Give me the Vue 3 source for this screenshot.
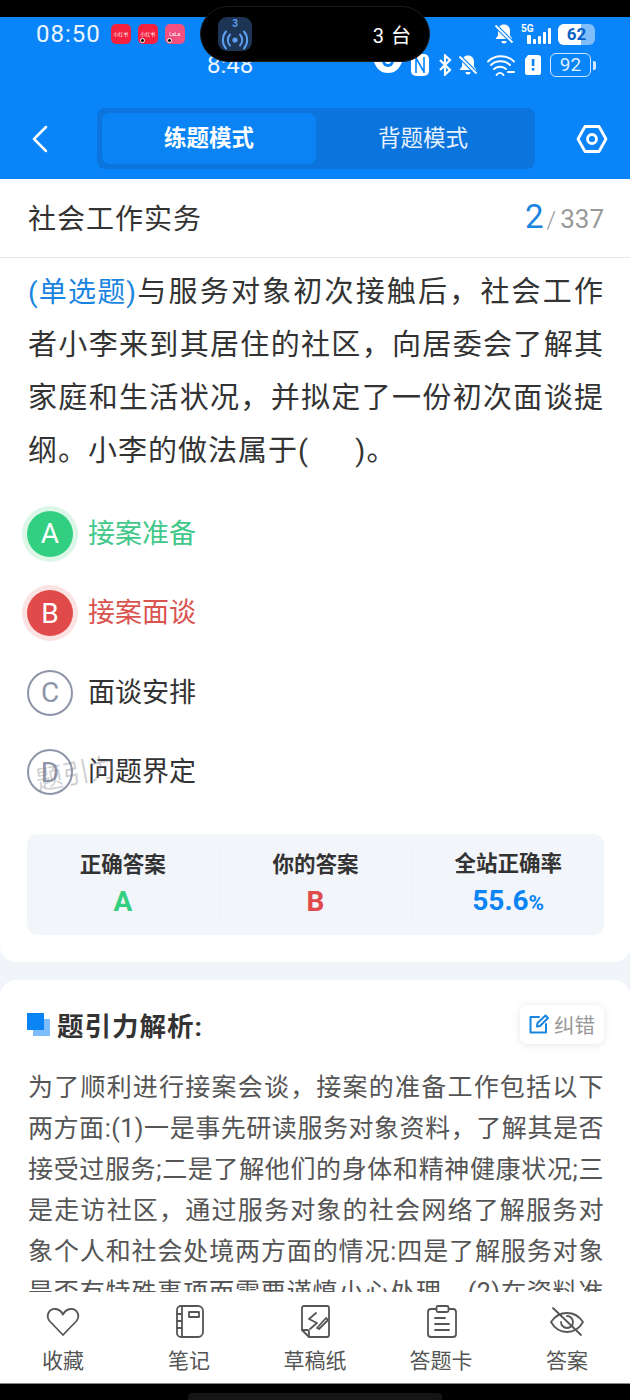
<template>
  <div class="page">
    <div class="camera-bar"></div>

    <!-- 灵动岛 -->
    <div class="island">
      <div class="island-app">
        <span class="island-num">3</span>
        <svg width="32" height="20" viewBox="0 0 32 20" fill="none" stroke="#5b9ef0" stroke-width="2" stroke-linecap="round">
          <circle cx="16" cy="10" r="2.6" fill="#5b9ef0" stroke="none" />
          <path d="M11 4.5a8 8 0 0 0 0 11M21 4.5a8 8 0 0 1 0 11M7 1.5a13 13 0 0 0 0 17M25 1.5a13 13 0 0 1 0 17" />
        </svg>
      </div>
      <span class="island-text">3 台</span>
    </div>

    <header class="header">
      <div class="status-row">
        <span class="status-time">08:50</span>
        <span class="app-badge red">小红书</span>
        <span class="app-badge red dot">小红书</span>
        <span class="app-badge pink dot">LaLa</span>
        <div class="status-right">
          <svg width="20" height="22" viewBox="0 0 20 22" fill="#fff">
            <path d="M10 1.5c-3.6 0-6 2.700-6 6.200v4.800L1.500 16h17L16 12.500V7.700c0-3.500-2.400-6.200-6-6.200zM7.500 18h5a2.500 2.500 0 0 1-5 0z" />
            <path d="M1.500 2.500l17 17" stroke="#0a85f9" stroke-width="4" />
            <path d="M1.500 2.500l17 17" stroke="#fff" stroke-width="1.800" />
          </svg>
          <div class="signal">
            <span class="signal-5g">5G</span>
            <div class="signal-bars">
              <i class="bar-arrow"></i><i style="height: 5px"></i><i style="height: 8px"></i><i style="height: 12px"></i><i style="height: 16px"></i>
            </div>
          </div>
          <div class="battery-top">
            <span class="battery-fill"></span>
            <span class="battery-num">62</span>
          </div>
        </div>
      </div>

      <div class="status-row second">
        <span class="status-time small">8:48</span>
        <div class="status-right second-right">
          <svg width="28" height="24" viewBox="0 0 28 24">
            <path d="M0 9c3-7 8-9 14-9s11 2 14 9c-3 8-8 11-14 11S3 17 0 9z" fill="#fff" />
            <circle cx="14" cy="8" r="6" fill="#0a85f9" />
            <circle cx="14" cy="8" r="3" fill="#fff" />
          </svg>
          <svg width="20" height="22" viewBox="0 0 20 22" fill="none" stroke="#fff" stroke-width="2">
            <rect x="1" y="0" width="18" height="22" rx="5" fill="#fff" stroke="none" />
            <path d="M6 3v16M14 3v16M6 4l8 14" stroke="#0a85f9" stroke-width="1.600" />
          </svg>
          <svg class="bluetooth" width="14" height="22" viewBox="0 0 14 22" fill="none" stroke="#fff" stroke-width="2.200">
            <path d="M2 6l10 10-5 4.500V1.500L12 6 2 16" />
          </svg>
          <svg width="20" height="22" viewBox="0 0 20 22" fill="#fff">
            <path d="M10 1.500c-3.600 0-6 2.700-6 6.200v4.800L1.500 16h17L16 12.500V7.700c0-3.500-2.400-6.200-6-6.200zM7.500 18h5a2.500 2.500 0 0 1-5 0z" />
            <path d="M1.500 2.500l17 17" stroke="#0a85f9" stroke-width="4" />
            <path d="M1.500 2.500l17 17" stroke="#fff" stroke-width="1.800" />
          </svg>
          <svg width="30" height="24" viewBox="0 0 30 24" fill="none" stroke="#fff" stroke-width="1.800" stroke-linecap="round">
            <path d="M2 8.500c7-7 19-7 26 0M5 12c5-5 14-5 19 0M8 16c3-3 9-3 12 0M10.500 22a4 4 0 0 1 7 0" />
            <path d="M22 19h6" stroke-width="2" />
          </svg>
          <svg width="18" height="22" viewBox="0 0 18 22">
            <path d="M4 1h10a3 3 0 0 1 3 3v15a2 2 0 0 1-2 2H3a2 2 0 0 1-2-2V5z" fill="#fff" />
            <rect x="7.800" y="5" width="2.600" height="7" fill="#0a85f9" />
            <rect x="7.800" y="14" width="2.600" height="2.600" fill="#0a85f9" />
          </svg>
          <div class="battery-line">
            <span class="battery-box">92</span>
            <i class="battery-cap"></i>
          </div>
        </div>
      </div>

      <nav class="nav">
        <svg class="back" width="16" height="28" viewBox="0 0 16 28" fill="none" stroke="#fff" stroke-width="2.500" stroke-linecap="round" stroke-linejoin="round">
          <path d="M14 2L2 14l12 12" />
        </svg>
        <div class="mode-switch">
          <div class="mode active">练题模式</div>
          <div class="mode">背题模式</div>
        </div>
        <svg class="setting" width="32" height="32" viewBox="0 0 32 32" fill="none" stroke="#fff" stroke-width="2.800" stroke-linejoin="round">
          <path d="M9 3.500h14L30 16l-7 12.500H9L2 16z" />
          <circle cx="16" cy="16" r="4.500" />
        </svg>
      </nav>
    </header>

    <main class="content">
      <section class="card question-card">
        <div class="title-row">
          <span class="subject">社会工作实务</span>
          <span class="progress"><b>2</b><em>/</em>337</span>
        </div>

        <p class="question">
          <span class="q-type">(单选题)</span>与服务对象初次接触后，社会工作者小李来到其居住的社区，向居委会了解其家庭和生活状况，并拟定了一份初次面谈提纲。小李的做法属于(&emsp;&ensp;)。
        </p>

        <div class="options">
          <div v-for="opt in options" :key="opt.key" class="option" :class="opt.state">
            <span class="circle">{{ opt.key }}</span>
            <span class="opt-text">{{ opt.text }}</span>
          </div>
          <span class="watermark">题引力</span>
        </div>

        <div class="stats">
          <div class="stat">
            <div class="stat-label">正确答案</div>
            <div class="stat-value green">A</div>
          </div>
          <div class="stat">
            <div class="stat-label">你的答案</div>
            <div class="stat-value red-text">B</div>
          </div>
          <div class="stat">
            <div class="stat-label">全站正确率</div>
            <div class="stat-value blue">55.6<small>%</small></div>
          </div>
        </div>
      </section>

      <section class="card analysis-card">
        <div class="analysis-head">
          <span class="squares"><i></i><i></i></span>
          <h2>题引力解析:</h2>
          <button class="fix-btn">
            <svg width="20" height="20" viewBox="0 0 20 20" fill="none" stroke="#1a85e0" stroke-width="2" stroke-linecap="round" stroke-linejoin="round">
              <path d="M10 3H1.500v15.500H17V10" />
              <path d="M8 12.500l.5-3.500 8-7.500 2.500 2.500-8 8z" />
            </svg>
            纠错
          </button>
        </div>
        <p class="analysis-text">
          为了顺利进行接案会谈，接案的准备工作包括以下两方面:(1)一是事先研读服务对象资料，了解其是否接受过服务;二是了解他们的身体和精神健康状况;三是走访社区，通过服务对象的社会网络了解服务对象个人和社会处境两方面的情况:四是了解服务对象是否有特殊事项而需要谨慎小心处理。(2)在资料准备的基础上，拟定初次面谈提纲。
        </p>
      </section>
    </main>

    <footer class="tabbar">
      <div v-for="tab in tabs" :key="tab.label" class="tab">
        <svg width="40" height="36" viewBox="0 0 40 36" fill="none" stroke="#555" stroke-width="1.800" stroke-linecap="round" stroke-linejoin="round">
          <path v-for="d in tab.paths" :key="d" :d="d" />
        </svg>
        <span>{{ tab.label }}</span>
      </div>
    </footer>

    <div class="home-area"><i class="home-bar"></i></div>
  </div>
</template>

<script setup>
const options = [
  { key: 'A', text: '接案准备', state: 'right' },
  { key: 'B', text: '接案面谈', state: 'wrong' },
  { key: 'C', text: '面谈安排', state: '' },
  { key: 'D', text: '问题界定', state: '' },
]

const tabs = [
  {
    label: '收藏',
    paths: ['M20 31L7 17.500C2 12 6 4.500 12.500 5c3.500.3 6 2.500 7.500 5.500 1.500-3 4-5.200 7.500-5.500C34 4.500 38 12 33 17.500z'],
  },
  {
    label: '笔记',
    paths: [
      'M12 2h17a5 5 0 0 1 5 5v21a5 5 0 0 1-5 5H12a4 4 0 0 1-4-4V6a4 4 0 0 1 4-4z',
      'M13 2v31M8 10h5M8 17h5M8 24h5',
      'M20 8h10v5H20z',
    ],
  },
  {
    label: '草稿纸',
    paths: [
      'M9 2h23a2 2 0 0 1 2 2v27a2 2 0 0 1-2 2H14l-7-7V4a2 2 0 0 1 2-2z',
      'M7 26h5a2 2 0 0 1 2 2v5',
      'M21 9l-7 6 8 4-7 6',
      'M22 24l9-10 2 2-9 9z',
    ],
  },
  {
    label: '答题卡',
    paths: [
      'M15 5h-5a3 3 0 0 0-3 3v22a3 3 0 0 0 3 3h22a3 3 0 0 0 3-3V8a3 3 0 0 0-3-3h-4',
      'M17 2h9a1.500 1.500 0 0 1 1.500 1.500v3A1.500 1.500 0 0 1 26 8h-9a1.500 1.500 0 0 1-1.500-1.500v-3A1.500 1.500 0 0 1 17 2z',
      'M14 14h10M14 20h14M14 26h14',
    ],
  },
  {
    label: '答案',
    paths: [
      'M4 18c4-6 9-9 16-9s12 3 16 9c-4 7-9 10-16 10S8 25 4 18z',
      'M20 12a6 6 0 1 1-6 6',
      'M6 4l28 27',
    ],
  },
]
</script>

<style scoped>
.page {
  position: relative;
  width: 630px;
  height: 1400px;
  display: flex;
  flex-direction: column;
  overflow: hidden;
  background: #f1f5f9;
  font-family: Roboto, "Noto Sans CJK SC", sans-serif;
}

.camera-bar {
  height: 17px;
  background: #000;
  flex: none;
}

.island {
  position: absolute;
  left: 200px;
  top: 6px;
  width: 230px;
  height: 56px;
  box-sizing: border-box;
  padding: 0 17px 0 17px;
  display: flex;
  align-items: center;
  justify-content: space-between;
  background: #000;
  border: 1px solid #1c1c1c;
  border-radius: 28px;
  z-index: 5;
}

.island-app {
  width: 34px;
  height: 34px;
  border-radius: 9px;
  background: #1d3554;
  display: flex;
  flex-direction: column;
  align-items: center;
  justify-content: center;
  line-height: 1;
}

.island-num {
  font-size: 10px;
  font-weight: 700;
  color: #5b9ef0;
  margin-bottom: 1px;
}

.island-text {
  color: #fff;
  font-size: 20px;
  letter-spacing: 1px;
}

.header {
  flex: none;
  height: 162px;
  background: #0a85f9;
  color: #fff;
  overflow: hidden;
}

.status-row {
  height: 34px;
  display: flex;
  align-items: center;
  padding-left: 36px;
  gap: 7px;
}

.status-time {
  font-size: 24px;
  letter-spacing: 1px;
  margin-right: 3px;
  color: #eaf5ff;
}

.app-badge {
  position: relative;
  width: 20px;
  height: 20px;
  border-radius: 5px;
  font-size: 5px;
  line-height: 20px;
  text-align: center;
  white-space: nowrap;
  overflow: hidden;
  color: #fff;
}

.app-badge.dot::after {
  content: "";
  position: absolute;
  left: 2px;
  bottom: 1px;
  width: 3px;
  height: 3px;
  border: 1px solid #fff;
  border-radius: 50%;
  background: #000;
}

.app-badge.red {
  background: #f5213f;
}

.app-badge.pink {
  background: #f4507f;
}

.status-right {
  margin-left: auto;
  padding-right: 35px;
  display: flex;
  align-items: center;
  gap: 7px;
}

.signal {
  width: 30px;
  line-height: 1;
}

.signal-5g {
  display: block;
  font-size: 10px;
  font-weight: 700;
  margin-bottom: -6px;
}

.signal-bars {
  height: 16px;
  display: flex;
  align-items: flex-end;
  justify-content: flex-end;
  gap: 2px;
}

.signal-bars i {
  width: 3px;
  background: #fff;
  border-radius: 1px;
}

.signal-bars .bar-arrow {
  height: 9px;
  width: 4px;
}

.battery-top {
  position: relative;
  width: 37px;
  height: 21px;
  border-radius: 6px;
  background: #7fbdfb;
  overflow: hidden;
  text-align: center;
}

.battery-fill {
  position: absolute;
  left: 0;
  top: 0;
  bottom: 0;
  width: 62%;
  background: #fff;
}

.battery-num {
  position: relative;
  font-size: 17px;
  font-weight: 700;
  line-height: 21px;
  color: #0a5fc4;
}

.status-row.second {
  height: 28px;
  margin-top: 0;
}

.status-time.small {
  margin-left: 171px;
  font-size: 24px;
  letter-spacing: 0;
}

.second-right {
  gap: 8px;
  padding-right: 34px;
}

.bluetooth {
  margin-right: -2px;
}

.battery-line {
  display: flex;
  align-items: center;
  gap: 2px;
}

.battery-box {
  width: 41px;
  height: 24px;
  box-sizing: border-box;
  border: 1.5px solid #cfe7ff;
  border-radius: 6px;
  text-align: center;
  font-size: 19px;
  line-height: 21px;
  color: #dff0ff;
}

.battery-cap {
  width: 3px;
  height: 9px;
  border-radius: 0 2px 2px 0;
  background: #cfe7ff;
}

.nav {
  height: 61px;
  margin-top: 29px;
  display: flex;
  align-items: center;
  padding: 0 22px 0 32px;
}

.back {
  flex: none;
}

.mode-switch {
  width: 438px;
  height: 61px;
  box-sizing: border-box;
  margin-left: 49px;
  padding: 5px;
  display: flex;
  background: #0b74dd;
  border-radius: 8px;
}

.mode {
  flex: 1;
  display: flex;
  align-items: center;
  justify-content: center;
  padding-bottom: 6px;
  font-size: 22.5px;
  border-radius: 8px;
  color: #e6f2ff;
}

.mode.active {
  flex: none;
  width: 214px;
  background: #0a84f5;
  color: #fff;
  font-weight: 700;
}

.setting {
  flex: none;
  margin-left: 41px;
}

.content {
  flex: 1;
  min-height: 0;
  overflow: hidden;
  display: flex;
  flex-direction: column;
  gap: 18px;
}

.card {
  flex: none;
  background: #fff;
}

.question-card {
  height: 783px;
  box-sizing: border-box;
  border-radius: 0 0 16px 16px;
}

.title-row {
  height: 79px;
  box-sizing: border-box;
  padding: 0 26px 3px 28px;
  display: flex;
  align-items: center;
  justify-content: space-between;
  border-bottom: 1px solid #e8e8e8;
}

.subject {
  font-size: 28px;
  letter-spacing: 1px;
  color: #333;
}

.progress {
  display: flex;
  align-items: baseline;
  font-size: 26px;
  color: #999;
}

.progress b {
  font-size: 33px;
  font-weight: 400;
  color: #1a85e0;
}

.progress em {
  font-style: normal;
  font-size: 24px;
  font-weight: 300;
  margin: 0 4px 0 3px;
}

.question {
  margin: 0;
  padding: 8px 26px 0 28px;
  font-size: 29px;
  line-height: 53px;
  letter-spacing: 1px;
  text-align: justify;
  color: #333;
}

.q-type {
  font-size: 28px;
  color: #1a85e0;
  letter-spacing: 0;
}

.options {
  position: relative;
  margin-top: 16px;
  padding-left: 27px;
}

.option {
  height: 79.5px;
  display: flex;
  align-items: center;
  gap: 15px;
}

.circle {
  width: 46px;
  height: 46px;
  box-sizing: border-box;
  border: 2px solid #8f95a8;
  border-radius: 50%;
  display: flex;
  align-items: center;
  justify-content: center;
  font-size: 28px;
  color: #8f95a8;
}

.opt-text {
  font-size: 27px;
  line-height: 34px;
  color: #333;
}

.option.right .circle {
  border: none;
  background: #33cf81;
  color: #fff;
  box-shadow: 0 0 0 5px #dcf7e8;
}

.option.right .opt-text {
  color: #3fc88a;
}

.option.wrong .circle {
  border: none;
  background: #e04a4a;
  color: #fff;
  box-shadow: 0 0 0 5px #fbe3e3;
}

.option.wrong .opt-text {
  color: #d9534f;
}

.watermark {
  position: absolute;
  left: 35px;
  top: 258px;
  font-size: 27px;
  color: rgba(120, 120, 130, 0.35);
  transform: rotate(-11deg);
  pointer-events: none;
}

.stats {
  margin: 22px 26px 0 27px;
  height: 101px;
  display: flex;
  align-items: center;
  background: #f2f5f9;
  border-radius: 10px;
}

.stat {
  flex: 1;
  text-align: center;
  border-left: 1px solid #eceff3;
}

.stat:first-child {
  border-left: none;
}

.stat-label {
  font-size: 21.5px;
  font-weight: 700;
  line-height: 30px;
  color: #333;
}

.stat-value {
  margin-top: 4px;
  font-size: 28px;
  line-height: 36px;
  font-weight: 700;
}

.stat-value small {
  font-size: 21px;
}

.green {
  color: #33cf81;
}

.red-text {
  color: #e04a4a;
}

.blue {
  color: #0a84f5;
}

.analysis-card {
  border-radius: 16px 16px 0 0;
  padding: 24px 26px 0 27px;
}

.analysis-head {
  display: flex;
  align-items: center;
  height: 40px;
}

.squares {
  position: relative;
  width: 23px;
  height: 23px;
  margin-right: 7px;
}

.squares i {
  position: absolute;
  width: 17px;
  height: 17px;
}

.squares i:first-child {
  left: 6px;
  top: 6px;
  background: #7dbdfb;
}

.squares i:last-child {
  left: 0;
  top: 0;
  background: #0a84f5;
}

.analysis-head h2 {
  margin: 0;
  font-size: 26.5px;
  font-weight: 700;
  letter-spacing: 1px;
  color: #333;
}

.fix-btn {
  margin-left: auto;
  width: 84px;
  height: 39px;
  padding: 0;
  border: none;
  border-radius: 8px;
  background: #fff;
  box-shadow: 0 1px 8px rgba(0, 0, 0, 0.1);
  display: flex;
  align-items: center;
  justify-content: center;
  gap: 5px;
  font-family: inherit;
  font-size: 20.5px;
  color: #999;
}

.analysis-text {
  margin: 23px 0 0 1px;
  font-size: 25px;
  line-height: 41px;
  letter-spacing: 0.5px;
  text-align: justify;
  color: #555;
}

.tabbar {
  flex: none;
  height: 91px;
  background: #fff;
  display: flex;
  border-bottom: 1px solid #888;
}

.tab {
  flex: 1;
  display: flex;
  flex-direction: column;
  align-items: center;
  padding-top: 12px;
  font-size: 21px;
  line-height: 30px;
  color: #555;
}

.tab span {
  margin-top: 6px;
}

.home-area {
  flex: none;
  height: 16px;
  background: #000;
  display: flex;
  justify-content: center;
  align-items: flex-end;
}

.home-bar {
  width: 254px;
  height: 7px;
  border-radius: 4px 4px 0 0;
  background: #151515;
}
</style>

<style>
body {
  margin: 0;
  background: #000;
}
</style>
